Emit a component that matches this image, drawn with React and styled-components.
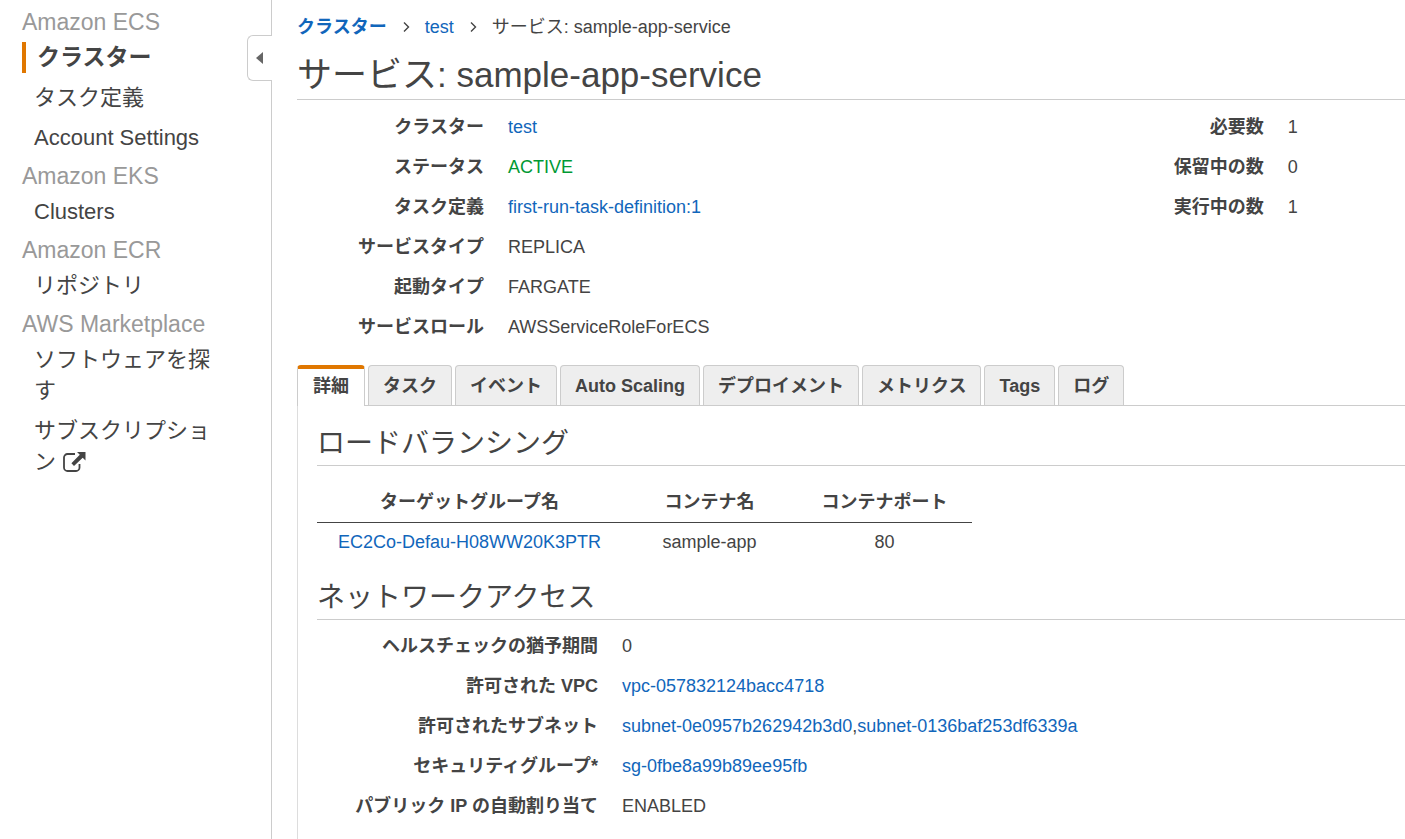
import { useState } from 'react';
import styled, { createGlobalStyle } from 'styled-components';

const GlobalStyle = createGlobalStyle`
  * {
    box-sizing: border-box;
  }

  body {
    margin: 0;
    background-color: #fff;
    color: #444;
    font-family: 'Liberation Sans', Arial, 'Noto Sans CJK JP', sans-serif;
    font-size: 18px;
    line-height: 24px;
  }
`;

// Page shell
const Page = styled.div`
  display: flex;
  min-height: 100vh;
  overflow: hidden;
`;

const Sidebar = styled.nav`
  position: relative;
  flex: 0 0 272px;
  padding: 5px 54px 0 22px;
  border-right: 1px solid #ccc;
  font-size: 22px;
`;

const CollapseButton = styled.button`
  position: absolute;
  top: 35px;
  right: -1px;
  width: 25px;
  height: 46px;
  display: flex;
  align-items: center;
  padding: 0 0 0 8px;
  background-color: #fff;
  border: 1px solid #ccc;
  border-right: none;
  border-radius: 6px 0 0 6px;
  cursor: pointer;
`;

const NavGroup = styled.section`
  margin-bottom: 6px;
`;

const NavTitle = styled.h2`
  margin: 0 0 3px;
  color: #999;
  font-size: 23px;
  font-weight: normal;
  line-height: 34px;
  white-space: nowrap;
`;

const NavList = styled.ul`
  display: flex;
  flex-direction: column;
  gap: 9px;
  margin: 0;
  padding: 0;
  list-style: none;
`;

const NavLink = styled.a`
  display: block;
  padding-left: ${({ $active }) => ($active ? '11px' : '12px')};
  border-left: ${({ $active }) => ($active ? '4px solid #e07700' : 'none')};
  color: #444;
  font-size: ${({ $active }) => ($active ? '23px' : '22px')};
  font-weight: ${({ $active }) => ($active ? 'bold' : 'normal')};
  line-height: 31px;
  text-decoration: none;
  word-break: break-all;
`;

const ExternalIcon = styled.svg`
  width: 24px;
  height: 22px;
  vertical-align: -4px;
`;

const Main = styled.main`
  flex: 1;
  min-width: 0;
  display: flex;
  flex-direction: column;
  padding: 15px 0 0 25px;
`;

const Link = styled.a`
  color: #1166bb;
  text-decoration: none;

  &:hover {
    text-decoration: underline;
  }
`;

// Breadcrumb
const Breadcrumb = styled.div`
  display: flex;
  align-items: center;
`;

const Chevron = styled.svg`
  width: 8px;
  height: 12px;
  margin: 0 15px;
`;

const PageTitle = styled.h1`
  margin: 8px 0 7px;
  padding-top: 3px;
  border-bottom: 1px solid #ccc;
  font-size: 35px;
  font-weight: normal;
  line-height: 49px;
`;

const Summary = styled.div`
  display: grid;
  grid-template-columns: 76fr 32fr;
  margin-bottom: 18px;
`;

const Fields = styled.dl`
  margin: 0;
`;

const Field = styled.div`
  display: flex;
  gap: 24px;
  line-height: 40px;
`;

const FieldLabel = styled.dt`
  flex: 0 0 ${({ $wide }) => ($wide ? '281px' : '187px')};
  font-weight: bold;
  text-align: right;
  white-space: nowrap;
`;

const FieldValue = styled.dd`
  margin: 0;
`;

const Status = styled.span`
  color: #009933;
`;

// Tabs
const TabBar = styled.div`
  display: flex;
  gap: 3px;
  border-bottom: 1px solid #ccc;
`;

const Tab = styled.button`
  height: ${({ $active }) => ($active ? '41px' : '40px')};
  margin-bottom: ${({ $active }) => ($active ? '-1px' : '0')};
  padding: ${({ $active }) => ($active ? '0 15px 3px' : '0 14px')};
  background-color: ${({ $active }) => ($active ? '#fff' : '#eee')};
  border: 1px solid #ccc;
  border-top: ${({ $active }) => ($active ? '4px solid #e07700' : '1px solid #ccc')};
  border-bottom: none;
  border-radius: 4px 4px 0 0;
  color: #444;
  font: inherit;
  font-weight: bold;
  white-space: nowrap;
  cursor: pointer;
`;

const Panel = styled.div`
  flex: 1;
  padding: 14px 0 12px 19px;
  border-left: 1px solid #ddd;
`;

const SectionTitle = styled.h2`
  margin: 0 0 6px;
  padding-top: 3px;
  border-bottom: 1px solid #ccc;
  font-size: 28px;
  font-weight: normal;
  line-height: 42px;
`;

const Table = styled.table`
  margin: 16px 0 12px;
  border-collapse: collapse;
  text-align: center;

  th,
  td {
    min-width: 175px;
    height: 40px;
    padding: 0 21px;
  }

  th {
    border-bottom: 1px solid #444;
  }
`;

const navGroups = [
  {
    title: 'Amazon ECS',
    items: [
      { label: 'クラスター', active: true },
      { label: 'タスク定義' },
      { label: 'Account Settings' },
    ],
  },
  { title: 'Amazon EKS', items: [{ label: 'Clusters' }] },
  { title: 'Amazon ECR', items: [{ label: 'リポジトリ' }] },
  {
    title: 'AWS Marketplace',
    items: [
      { label: 'ソフトウェアを探す' },
      { label: 'サブスクリプション', external: true },
    ],
  },
];

const serviceFields = [
  { label: 'クラスター', value: <Link href="#cluster">test</Link> },
  { label: 'ステータス', value: <Status>ACTIVE</Status> },
  { label: 'タスク定義', value: <Link href="#task">first-run-task-definition:1</Link> },
  { label: 'サービスタイプ', value: 'REPLICA' },
  { label: '起動タイプ', value: 'FARGATE' },
  { label: 'サービスロール', value: 'AWSServiceRoleForECS' },
];

const countFields = [
  { label: '必要数', value: '1' },
  { label: '保留中の数', value: '0' },
  { label: '実行中の数', value: '1' },
];

const networkFields = [
  { label: 'ヘルスチェックの猶予期間', value: '0' },
  { label: '許可された VPC', value: <Link href="#vpc">vpc-057832124bacc4718</Link> },
  {
    label: '許可されたサブネット',
    value: (
      <>
        <Link href="#subnet-1">subnet-0e0957b262942b3d0</Link>,
        <Link href="#subnet-2">subnet-0136baf253df6339a</Link>
      </>
    ),
  },
  { label: 'セキュリティグループ*', value: <Link href="#sg">sg-0fbe8a99b89ee95fb</Link> },
  { label: 'パブリック IP の自動割り当て', value: 'ENABLED' },
];

const tabs = [
  '詳細',
  'タスク',
  'イベント',
  'Auto Scaling',
  'デプロイメント',
  'メトリクス',
  'Tags',
  'ログ',
];

const FieldList = ({ fields, wide }) => (
  <Fields>
    {fields.map((field) => (
      <Field key={field.label}>
        <FieldLabel $wide={wide}>{field.label}</FieldLabel>
        <FieldValue>{field.value}</FieldValue>
      </Field>
    ))}
  </Fields>
);

const Separator = () => (
  <Chevron viewBox="0 0 8 12" aria-hidden="true">
    <path d="M2 1.500l4.500 4.500-4.500 4.500" fill="none" stroke="#444" strokeWidth="1.4" />
  </Chevron>
);

const App = () => {
  const [activeTab, setActiveTab] = useState('詳細');

  return (
    <>
      <GlobalStyle />
      <Page>
        <Sidebar>
          {navGroups.map((group) => (
            <NavGroup key={group.title}>
              <NavTitle>{group.title}</NavTitle>
              <NavList>
                {group.items.map((item) => (
                  <li key={item.label}>
                    <NavLink href="#nav" $active={item.active}>
                      {item.label}
                      {item.external && ' '}
                      {item.external && (
                        <ExternalIcon viewBox="0 0 24 22" aria-hidden="true">
                          <path
                            d="M13 3H5.5A3.5 3.5 0 0 0 2 6.500V16.500A3.500 3.500 0 0 0 5.500 20H14A3.500 3.500 0 0 0 17.500 16.500V13"
                            fill="none"
                            stroke="#444"
                            strokeWidth="1.8"
                          />
                          <path d="M15 1h8.500v8.500l-2.800-2.800-8.700 8.200-2.600-2.600 8.400-8.500z" fill="#444" />
                        </ExternalIcon>
                      )}
                    </NavLink>
                  </li>
                ))}
              </NavList>
            </NavGroup>
          ))}
          <CollapseButton aria-label="メニューを閉じる">
            <svg width="7" height="12" viewBox="0 0 7 12">
              <path d="M7 0v12L0 6z" fill="#666" />
            </svg>
          </CollapseButton>
        </Sidebar>

        <Main>
          <Breadcrumb>
            <Link href="#clusters">
              <b>クラスター</b>
            </Link>
            <Separator />
            <Link href="#test">test</Link>
            <Separator />
            <span>サービス: sample-app-service</span>
          </Breadcrumb>
          <PageTitle>サービス: sample-app-service</PageTitle>

          <Summary>
            <FieldList fields={serviceFields} />
            <FieldList fields={countFields} />
          </Summary>

          <TabBar role="tablist">
            {tabs.map((tab) => (
              <Tab
                key={tab}
                role="tab"
                aria-selected={tab === activeTab}
                $active={tab === activeTab}
                onClick={() => setActiveTab(tab)}
              >
                {tab}
              </Tab>
            ))}
          </TabBar>

          <Panel>
            <SectionTitle>ロードバランシング</SectionTitle>
            <Table>
              <thead>
                <tr>
                  <th>ターゲットグループ名</th>
                  <th>コンテナ名</th>
                  <th>コンテナポート</th>
                </tr>
              </thead>
              <tbody>
                <tr>
                  <td>
                    <Link href="#target">EC2Co-Defau-H08WW20K3PTR</Link>
                  </td>
                  <td>sample-app</td>
                  <td>80</td>
                </tr>
              </tbody>
            </Table>

            <SectionTitle>ネットワークアクセス</SectionTitle>
            <FieldList fields={networkFields} wide />
          </Panel>
        </Main>
      </Page>
    </>
  );
};

export default App;
